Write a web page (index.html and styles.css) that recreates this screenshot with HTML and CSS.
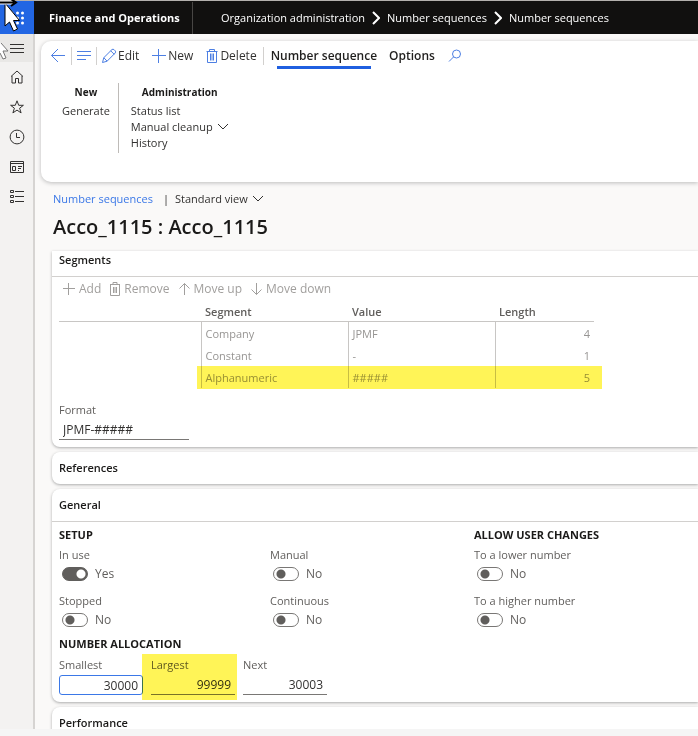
FILE: index.html
```html
<!DOCTYPE html>
<html lang="en">
<head>
<meta charset="utf-8">
<meta name="viewport" content="width=device-width, initial-scale=1">
<title>Number sequences - Finance and Operations</title>
<link rel="stylesheet" href="styles.css">
</head>
<body>
<div class="app">
  <header class="topbar">
    <button class="waffle" type="button" aria-label="App launcher">
      <svg width="34" height="32" viewBox="0 0 34 32"><g fill="#fff"><circle cx="12" cy="11" r="1.5"/><circle cx="17.500" cy="11" r="1.500"/><circle cx="22.500" cy="11" r="1.500"/><circle cx="12" cy="16" r="1.500"/><circle cx="17.500" cy="16" r="1.500"/><circle cx="22.500" cy="16" r="1.500"/><circle cx="12" cy="21" r="1.500"/><circle cx="17.500" cy="21" r="1.500"/><circle cx="22.500" cy="21" r="1.500"/></g></svg>
    </button>
    <span class="brand">Finance and Operations</span>
    <nav class="crumbs" aria-label="Breadcrumb">
      <a href="#">Organization administration</a>
      <svg width="8" height="14" viewBox="0 0 8 14"><path d="M1 1l6 6-6 6" class="line"/></svg>
      <a href="#">Number sequences</a>
      <svg width="8" height="14" viewBox="0 0 8 14"><path d="M1 1l6 6-6 6" class="line"/></svg>
      <a href="#">Number sequences</a>
    </nav>
  </header>
  <div class="body">
    <nav class="rail" aria-label="Main">
      <button class="rail-menu" type="button" aria-label="Expand navigation"><svg width="16" height="16" viewBox="0 0 16 16"><path d="M1 4.500h14M1 8.500h14M1 12.500h14" class="line"/></svg></button>
      <button type="button" aria-label="Home"><svg width="16" height="16" viewBox="0 0 16 16"><path d="M2 7.500L8 2l6 5.500M3 7v7h3.500V9.500h3V14H13V7" class="line"/></svg></button>
      <button type="button" aria-label="Favorites"><svg width="16" height="16" viewBox="0 0 16 16"><path d="M8 1.800l1.700 4.500h4.700l-3.800 2.900 1.500 4.700L8 11.100l-4.100 2.800 1.500-4.700-3.800-2.900h4.700z" class="line"/></svg></button>
      <button type="button" aria-label="Recent"><svg width="16" height="16" viewBox="0 0 16 16"><circle cx="8" cy="8" r="6.900" class="line"/><path d="M7.500 4v4.500h3.500" class="line"/></svg></button>
      <button type="button" aria-label="Workspaces"><svg width="16" height="16" viewBox="0 0 16 16"><path d="M1.500 2.500h13v11h-13zM1.500 4.500h13M3.500 7.500h3v4h-3zM9 7.500h4M9 9.500h3M9 11.500h1" class="line"/></svg></button>
      <button type="button" aria-label="Modules"><svg width="16" height="16" viewBox="0 0 16 16"><path d="M1.500 1.500h3v2h-3zM1.500 6.500h3v2h-3zM1.500 11.500h3v2h-3zM6 2.500h9M6 7.500h9M6 12.500h9" class="line"/></svg></button>
    </nav>
    <main class="content">
      <section class="pane">
        <div class="toolbar">
          <button class="icon-btn first" type="button" aria-label="Back"><svg width="16" height="16" viewBox="0 0 16 16"><path d="M15 7.500H1.500M8 1L1.500 7.500 8 14" class="line"/></svg></button>
          <button class="icon-btn" type="button" aria-label="Show list"><svg width="16" height="16" viewBox="0 0 16 16"><path d="M1 3.500h14M1 7.500h14M1 11.500h9" class="line"/></svg></button>
          <div class="commands">
            <button type="button"><svg width="16" height="16" viewBox="0 0 16 16"><path d="M1.500 14.500l1.300-4.800L11 1.500q1-.8 2.300.4l.8.800q1 1.200.2 2.200L6.100 13.200zM2.800 9.700l3.300 3.500M9.700 2.800l3.500 3.500" class="line"/></svg>Edit</button>
            <button type="button"><svg width="16" height="16" viewBox="0 0 16 16"><path d="M7.500 1v14M1 7.500h14" class="line"/></svg>New</button>
            <button type="button"><svg width="14" height="16" viewBox="0 0 14 16"><path d="M1.500 3.500h11M4.500 3V1.500h5V3M2.500 3.500v11h9v-11M5.500 5.500v7M7 5.500v7M8.500 5.500v7" class="line"/></svg>Delete</button>
          </div>
          <div class="tabs">
            <button class="tab active" type="button">Number sequence</button>
            <button class="tab" type="button">Options</button>
            <button type="button" aria-label="Search"><svg width="16" height="16" viewBox="0 0 16 16"><circle cx="9.500" cy="6" r="4" class="line"/><path d="M6.600 8.900L2 13.500" class="line"/></svg></button>
          </div>
        </div>
        <div class="groups">
          <div class="group">
            <h2>New</h2>
            <button type="button">Generate</button>
          </div>
          <div class="group">
            <h2>Administration</h2>
            <button type="button">Status list</button>
            <button type="button">Manual cleanup <svg width="12" height="8" viewBox="0 0 12 8"><path d="M1 1l5 5 5-5" class="line"/></svg></button>
            <button type="button">History</button>
          </div>
        </div>
      </section>

      <div class="record">
        <div class="view">
          <a href="#">Number sequences</a><span class="bar">|</span>
          <button type="button">Standard view <svg width="12" height="8" viewBox="0 0 12 8"><path d="M1 1l5 5 5-5" class="line"/></svg></button>
        </div>
        <h1>Acco_1115 : Acco_1115</h1>
      </div>

      <div class="tabs-stack">
        <section class="card segments">
          <h2>Segments</h2>
          <div class="card-body">
            <div class="grid-tools">
              <button type="button" disabled><svg width="14" height="14" viewBox="0 0 14 14"><path d="M6.500 1v12M1 6.500h12" class="line"/></svg>Add</button>
              <button type="button" disabled><svg width="12" height="14" viewBox="0 0 12 14"><path d="M1 2.500h10M4 2.500V.5h4v2M1.500 3v10.500h9V3M4.500 5v6M6 5v6M7.500 5v6" class="line"/></svg>Remove</button>
              <button type="button" disabled><svg width="13" height="14" viewBox="0 0 13 14"><path d="M6.500 13V1.500M1.500 6.500l5-5 5 5" class="line"/></svg>Move up</button>
              <button type="button" disabled><svg width="13" height="14" viewBox="0 0 13 14"><path d="M6.500 1v11.500M1.500 7.500l5 5 5-5" class="line"/></svg>Move down</button>
            </div>
            <table>
              <colgroup><col class="c-blank"><col class="c-text"><col class="c-text"><col></colgroup>
              <thead><tr><td></td><th scope="col">Segment</th><th scope="col">Value</th><th scope="col">Length</th></tr></thead>
              <tbody>
                <tr><td></td><td>Company</td><td>JPMF</td><td>4</td></tr>
                <tr><td></td><td>Constant</td><td>-</td><td>1</td></tr>
                <tr><td class="marker"></td><td>Alphanumeric</td><td>#####</td><td>5</td></tr>
              </tbody>
            </table>
            <div class="field format">
              <label for="format">Format</label>
              <input id="format" type="text" value="JPMF-#####" readonly>
            </div>
          </div>
        </section>

        <section class="card"><h2>References</h2></section>

        <section class="card general">
          <h2>General</h2>
          <div class="card-body">
            <div class="options">
              <div>
                <h3>SETUP</h3>
                <label for="inuse">In use</label>
                <div class="switch"><input id="inuse" type="checkbox" role="switch" checked><span>Yes</span></div>
                <label for="stopped">Stopped</label>
                <div class="switch"><input id="stopped" type="checkbox" role="switch"><span>No</span></div>
              </div>
              <div class="no-title">
                <label for="manual">Manual</label>
                <div class="switch"><input id="manual" type="checkbox" role="switch"><span>No</span></div>
                <label for="continuous">Continuous</label>
                <div class="switch"><input id="continuous" type="checkbox" role="switch"><span>No</span></div>
              </div>
              <div>
                <h3>ALLOW USER CHANGES</h3>
                <label for="lower">To a lower number</label>
                <div class="switch"><input id="lower" type="checkbox" role="switch"><span>No</span></div>
                <label for="higher">To a higher number</label>
                <div class="switch"><input id="higher" type="checkbox" role="switch"><span>No</span></div>
              </div>
            </div>
            <h3>NUMBER ALLOCATION</h3>
            <div class="numbers">
              <div class="field focused"><label for="smallest">Smallest</label><input id="smallest" type="text" value="30000"></div>
              <div class="field highlighted"><label for="largest">Largest</label><input id="largest" type="text" value="99999"></div>
              <div class="field"><label for="next">Next</label><input id="next" type="text" value="30003"></div>
            </div>
          </div>
        </section>

        <section class="card last"><h2>Performance</h2></section>
      </div>
    </main>
  </div>
  <footer class="status"></footer>
  <svg class="pointer ghost" width="14" height="22" viewBox="0 0 14 22"><path d="M-6-8L8 8H3l3 7-3 1-3-6-6 5z"/></svg>
  <svg class="pointer main" width="22" height="34" viewBox="0 0 22 34"><path d="M5 3v23l4.500-4 4 9 4-2-4-8.500h6z"/><path d="M-1 2.500h14" class="resize-edge"/><path d="M-1 2.500h15M11-1l5 3.500-5 3.500" class="resize"/></svg>
</div>
</body>
</html>
```
FILE: styles.css
```css
* { box-sizing: border-box; }

body {
  margin: 0;
  background: #faf9f8;
  color: #323130;
  font: 12px/16px "Open Sans", "Noto Sans", sans-serif;
}

h1, h2, h3 { margin: 0; font-weight: 600; color: #1b1a19; }
a { color: inherit; text-decoration: none; }

button {
  display: flex;
  align-items: center;
  padding: 0;
  border: 0;
  background: none;
  color: inherit;
  font: inherit;
  white-space: nowrap;
}

svg { display: block; flex: none; }
.line { fill: none; stroke: currentColor; stroke-width: 1; }

.app { position: relative; display: flex; flex-direction: column; height: 100vh; overflow: hidden; }

.topbar {
  display: flex;
  align-items: center;
  flex: none;
  height: 34px;
  border-top: 1px solid #b3b0ad;
  background: #11100f;
  color: #fff;
  font-size: 11px;
}
.waffle { width: 34px; height: 33px; background: #2266e3; }
.brand {
  width: 159px;
  padding-left: 15px;
  border-right: 1px solid #484644;
  font-weight: 700;
  line-height: 32px;
  white-space: nowrap;
}
.crumbs { display: flex; align-items: center; gap: 7px; padding-left: 28px; white-space: nowrap; }
.crumbs .line { stroke-width: 2; }

.body { display: flex; flex: 1; min-height: 0; }
.rail {
  flex: none;
  width: 35px;
  border-right: 2px solid #d6d4d2;
  background: #f3f2f1;
}
.rail button { justify-content: center; width: 100%; height: 30px; }
.rail .rail-menu { height: 28px; background: #e9e8e6; }

.content { flex: 1; min-width: 0; padding: 7px 0 0 6px; overflow: hidden; }

.pane {
  height: 141px;
  border-radius: 10px 0 0 10px;
  background: #fff;
  box-shadow: 0 1px 4px #bbb;
}
.toolbar { display: flex; align-items: center; height: 30px; }
.toolbar svg { color: #4d7fe3; }
.icon-btn { height: 18px; padding: 0 5px; border-right: 1px solid #d2d0ce; }
.icon-btn.first { padding-left: 9px; }
.icon-btn + .icon-btn { padding: 0 4px; }
.commands { display: flex; gap: 12px; padding: 0 6px 0 4px; border-right: 1px solid #d2d0ce; }
.commands button { gap: 1px; height: 18px; }
.tabs { display: flex; gap: 12px; padding-left: 7px; }
.tab { position: relative; font-weight: 600; color: #201f1e; }
.tab.active::after {
  content: "";
  position: absolute;
  inset: 18px 6px auto;
  height: 3px;
  background: #1f5fe0;
}

.groups { display: flex; padding: 12px 0 0 9px; }
.group { height: 70px; padding: 0 8px 0 12px; font-size: 11px; }
.group + .group { border-left: 1px solid #bebbb8; }
.group h2 { margin: 2px 0 4px; text-align: center; font-size: 10px; font-weight: 700; line-height: 14px; }
.group svg, .view svg { margin-left: 4px; }

.record { padding: 8px 0 0 12px; }
.view { display: flex; align-items: center; height: 18px; font-size: 11px; }
.view a { color: #3b78e7; }
.view .bar { margin: 0 6px 0 10px; }
h1 { margin-top: 4px; font-size: 20px; line-height: 30px; }

.tabs-stack { display: flex; flex-direction: column; gap: 5px; padding: 9px 0 0 11px; }
.card { border-radius: 8px 0 0 8px; background: #fff; box-shadow: 0 1px 3px #aaa; }
.card > h2 { padding-left: 7px; font-size: 11px; line-height: 32px; }
.segments { border-top-left-radius: 0; }
.segments > h2 { padding: 1px 0 8px 7px; line-height: 16px; }
.card-body { padding-left: 7px; border-top: 1px solid #d2d0ce; }
.last { height: 40px; }

.grid-tools { display: flex; gap: 8px; height: 24px; padding-left: 3px; color: #a19f9d; }
.grid-tools button { gap: 3px; color: inherit; }

table { width: 535px; border-collapse: collapse; table-layout: fixed; color: #979593; }
.c-blank { width: 142px; }
.c-text { width: 147px; }
td, th { padding: 1px 4px 0; line-height: 21px; text-align: left; }
tbody td { font-size: 11px; }
thead td, thead th { border-bottom: 1px solid #c8c6c4; line-height: 19px; color: #605e5c; font-weight: 600; font-size: 11px; }
tbody td + td { border-left: 1px solid #c8c6c4; }
tbody td:last-child { text-align: right; }
.marker { position: relative; }
.marker::after {
  content: "";
  position: absolute;
  top: 0;
  left: 138px;
  width: 405px;
  height: 23px;
  background: #fff457;
  mix-blend-mode: multiply;
}

.field label { display: block; color: #605e5c; font-size: 11px; font-weight: 500; }
.field input {
  display: block;
  width: 100%;
  height: 20px;
  padding: 0 4px;
  border: 0;
  border-bottom: 1px solid #797775;
  outline: 0;
  background: none;
  color: #323130;
  font: inherit;
}
.format { width: 130px; padding: 14px 0 7px; }
.format input { margin-top: 2px; }

h3 { font-size: 11px; font-weight: 700; line-height: 16px; }
.general .card-body { padding-top: 5px; }
.options { display: grid; grid-template-columns: 211px 204px 1fr; padding-bottom: 1px; }
.options label { display: block; margin-top: 4px; color: #605e5c; font-size: 11px; font-weight: 500; }
.no-title { padding-top: 16px; }
.switch { display: flex; align-items: center; gap: 7px; height: 22px; margin-bottom: 4px; padding-left: 3px; color: #605e5c; }
.switch + label { margin-top: 8px; }
.switch input {
  appearance: none;
  width: 26px;
  height: 14px;
  margin: 0;
  border: 1px solid #797775;
  border-radius: 7px;
  background: radial-gradient(circle at 7px 6px, #605e5c 4px, transparent 5px);
}
.switch input:checked { background: radial-gradient(circle at 18px 6px, #fff 4px, #605e5c 5px); border-color: #605e5c; }

.numbers { display: flex; gap: 8px; padding: 5px 0 7px; }
.numbers .field { position: relative; width: 84px; }
.numbers input { margin-top: 2px; text-align: right; }
.numbers .focused input { border: 1px solid #3b78e7; border-radius: 3px; }
.highlighted::after {
  content: "";
  position: absolute;
  inset: -3px -2px -5px -9px;
  background: #fff457;
  mix-blend-mode: multiply;
}

.status { flex: none; height: 7px; background: #f5f5f5; }

.pointer { position: absolute; left: 0; top: 0; fill: #fff; stroke: #000; stroke-width: 1; pointer-events: none; }
.pointer.ghost { top: 43px; stroke: #777; }
.resize { fill: none; stroke: #000; stroke-width: 2; }
.resize-edge { fill: none; stroke: #fff; stroke-width: 4; }
```
